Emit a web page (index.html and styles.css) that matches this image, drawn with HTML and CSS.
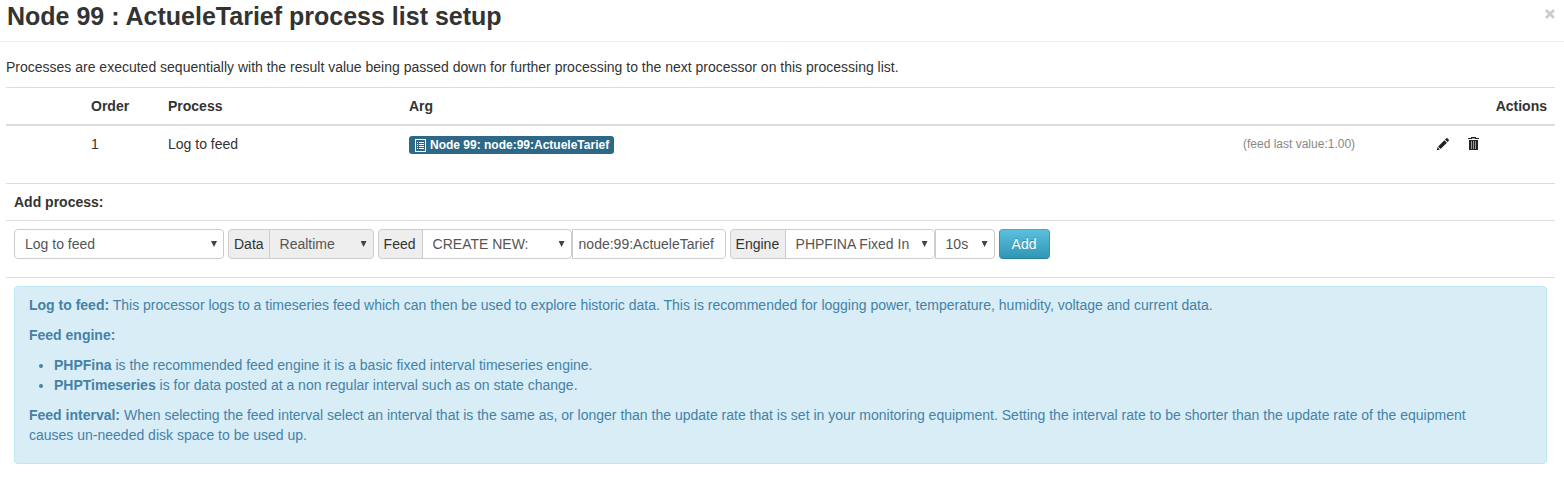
FILE: index.html
```html
<!DOCTYPE html>
<html lang="en">
<head>
<meta charset="utf-8">
<title>Process list setup</title>
<link rel="stylesheet" href="styles.css">
</head>
<body>
<header class="modal-header">
  <h1 class="title">Node 99 : ActueleTarief process list setup</h1>
  <button class="close" type="button" aria-label="Close">
    <svg width="10" height="10" viewBox="0 0 10 10"><path d="M1 1l8 8M9 1l-8 8" stroke="currentColor" stroke-width="2.6" fill="none"/></svg>
  </button>
</header>
<main class="modal-body">
  <p class="intro">Processes are executed sequentially with the result value being passed down for further processing to the next processor on this processing list.</p>

  <table class="table process-list">
    <colgroup>
      <col class="col-move"><col class="col-order"><col class="col-process"><col><col class="col-value"><col class="col-edit"><col class="col-delete">
    </colgroup>
    <thead>
      <tr><th></th><th>Order</th><th>Process</th><th>Arg</th><th></th><th class="actions" colspan="2">Actions</th></tr>
    </thead>
    <tbody>
      <tr>
        <td></td>
        <td>1</td>
        <td>Log to feed</td>
        <td><span class="label"><svg class="label-icon" width="11" height="13" viewBox="0 0 11 13" fill="none" stroke="currentColor" shape-rendering="crispEdges"><path d="M.5 .5h10v12h-10z"/><path d="M2 3.5h1M4 3.5h5M2 5.5h1M4 5.5h5M2 7.5h1M4 7.5h5M2 9.5h1M4 9.5h5"/></svg>Node 99: node:99:ActueleTarief</span></td>
        <td class="last-value">(feed last value:1.00)</td>
        <td><button class="icon-button" type="button" aria-label="Edit"><svg width="14" height="14" viewBox="0 0 14 14" fill="currentColor"><path d="M.8 13.2l.7-3.1 2.4 2.4zM2.1 9.4l6.3-6.2 2.5 2.5-6.3 6.2zM9 2.6l1.4-1.3q.5-.5 1 0l1.4 1.4q.4.5 0 1l-1.3 1.4z"/></svg></button></td>
        <td><button class="icon-button" type="button" aria-label="Delete"><svg width="11" height="13" viewBox="0 0 11 13" fill="currentColor" shape-rendering="crispEdges"><path d="M3 0h5v1h3v1H0V1h3zM1 3h9v10H1z"/><path d="M3 4h1v8H3zM5 4h1v8H5zM7 4h1v8H7z" fill="#999"/><path d="M4 1h3" stroke="#999"/></svg></button></td>
      </tr>
    </tbody>
  </table>

  <table class="table">
    <tbody>
      <tr><th>Add process:</th></tr>
      <tr>
        <td>
          <form class="controls">
            <span class="select w-210"><select aria-label="Process"><option>Log to feed</option></select></span>
            <div class="group">
              <label class="addon" for="data">Data</label>
              <span class="select w-105 last"><select id="data" disabled><option>Realtime</option></select></span>
            </div>
            <div class="group">
              <label class="addon addon-feed" for="feed">Feed</label>
              <span class="select w-150 last"><select id="feed"><option>CREATE NEW:</option></select></span>
              <input class="feed-name" type="text" aria-label="Feed name" value="node:99:ActueleTarief">
            </div>
            <div class="group">
              <label class="addon addon-engine" for="engine">Engine</label>
              <span class="select w-150 last"><select id="engine"><option>PHPFINA Fixed In</option></select></span>
              <span class="select w-60 tail"><select aria-label="Interval"><option>10s</option></select></span>
            </div>
            <button class="add" type="button">Add</button>
          </form>
        </td>
      </tr>
      <tr>
        <td>
          <div class="alert">
            <p><b>Log to feed:</b> This processor logs to a timeseries feed which can then be used to explore historic data. This is recommended for logging power, temperature, humidity, voltage and current data.</p>
            <p><b>Feed engine:</b></p>
            <ul>
              <li><b>PHPFina</b> is the recommended feed engine it is a basic fixed interval timeseries engine.</li>
              <li><b>PHPTimeseries</b> is for data posted at a non regular interval such as on state change.</li>
            </ul>
            <p><b>Feed interval:</b> When selecting the feed interval select an interval that is the same as, or longer than the update rate that is set in your monitoring equipment. Setting the interval rate to be shorter than the update rate of the equipment causes un-needed disk space to be used up.</p>
          </div>
        </td>
      </tr>
    </tbody>
  </table>
</main>
</body>
</html>
```
FILE: styles.css
```css
* { box-sizing: border-box; }

body {
  margin: 0;
  background: #fff;
  color: #333;
  font: 14px/20px "Liberation Sans", Arial, sans-serif;
}

button, input, select { font: inherit; }

.modal-header {
  display: flex;
  justify-content: space-between;
  align-items: flex-start;
  height: 42px;
  padding: 1px 9px 0 7px;
  border-bottom: 1px solid #eee;
}

.title {
  margin: 0;
  font-size: 25px;
  line-height: 30px;
}

.close {
  display: flex;
  margin: 8px 0 0;
  padding: 0;
  border: 0;
  background: none;
  color: #ccc;
}

.modal-body { padding: 15px 9px 0 6px; }

.intro { margin: 0 0 10px; }

.table {
  width: 100%;
  border-collapse: separate;
  border-spacing: 0;
}

.table th,
.table td {
  padding: 8px;
  border-top: 1px solid #ddd;
  text-align: left;
  vertical-align: top;
}

.process-list {
  table-layout: fixed;
  margin-bottom: 21px;
}

.process-list tbody td { border-top-width: 2px; }
.process-list .actions { text-align: right; }

.col-move, .col-order { width: 77px; }
.col-process { width: 241px; }
.col-value { width: 193px; }
.col-edit { width: 32px; }
.col-delete { width: 95px; }

.label {
  display: inline-flex;
  align-items: center;
  gap: 4px;
  height: 18px;
  margin-top: 2px;
  padding: 0 5px 0 6px;
  border-radius: 3px;
  background: #2d6987;
  color: #fff;
  font-size: 12px;
  font-weight: bold;
  line-height: 18px;
  vertical-align: top;
}

.table .last-value {
  color: #888;
  font-size: 12px;
}

.icon-button {
  display: flex;
  margin-top: 3px;
  padding: 0;
  border: 0;
  background: none;
  color: #222;
}

.controls {
  display: flex;
  gap: 4px;
  margin: 0 0 10px;
}

.group { display: flex; }

.select {
  display: block;
  position: relative;
}

.select::after {
  content: "";
  position: absolute;
  top: 12px;
  right: 7px;
  width: 6px;
  height: 6px;
  background: #444;
  clip-path: polygon(0 0, 100% 0, 50% 100%);
  pointer-events: none;
}

.select select,
.feed-name {
  display: block;
  width: 100%;
  height: 30px;
  margin: 0;
  border: 1px solid #ccc;
  border-radius: 4px;
  background: #fff;
  color: #555;
}

.select select {
  appearance: none;
  padding: 0 0 0 10px;
}

.select select:disabled {
  background: #eee;
  opacity: 1;
}

.feed-name {
  width: 154px;
  padding: 4px 6px;
  border-radius: 0 4px 4px 0;
}

.w-210 { width: 210px; }
.w-150 { width: 150px; }
.w-105 { width: 105px; }
.w-60 { width: 60px; }

.last select,
.tail select { border-radius: 0 4px 4px 0; }

.addon {
  height: 30px;
  margin-right: -1px;
  padding: 4px 5px;
  border: 1px solid #ccc;
  border-radius: 4px 0 0 4px;
  background: #eee;
}

.addon-feed { min-width: 45px; }
.addon-engine { min-width: 56px; }

.add {
  height: 30px;
  padding: 0 12px;
  border: 1px solid;
  border-color: #45a9c6 #3498b5 #2a7f99;
  border-radius: 4px;
  background: linear-gradient(#5bc0de, #2f96b4);
  color: #fff;
  text-shadow: 0 -1px 0 rgba(0, 0, 0, .25);
}

.alert {
  padding: 8px 35px 8px 14px;
  border: 1px solid #bce8f1;
  border-radius: 4px;
  background: #d9edf7;
  color: #4482a6;
}

.alert p { margin: 0 0 10px; }

.alert ul {
  margin: 0 0 10px 25px;
  padding: 0;
}
```
